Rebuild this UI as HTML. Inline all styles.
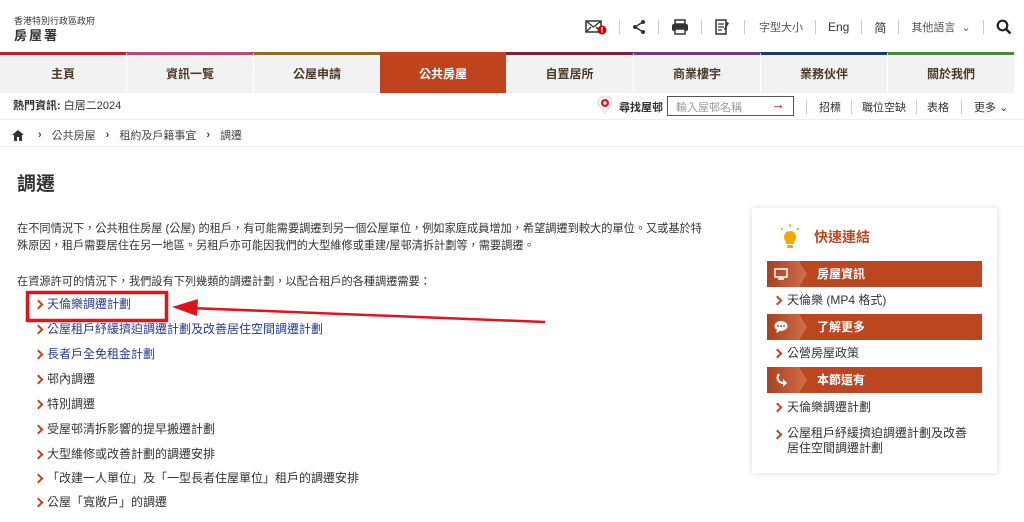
<!DOCTYPE html>
<html><head><meta charset="utf-8"><style>
*{margin:0;padding:0;box-sizing:border-box}
body{width:1024px;height:522px;overflow:hidden;background:#fff;font-family:"Liberation Sans","Noto Sans CJK TC",sans-serif;color:#333;position:relative;font-size:12px}
.abs{position:absolute}
.nav{position:absolute;top:52px;height:41px;background:#f2f2f2;border-top:3px solid;text-align:center;line-height:38px;font-size:12px;font-weight:bold;color:#4a3a2a}
.sep{display:inline-block;width:1px;height:14px;background:#ccc;vertical-align:middle;flex:none}
.li{position:absolute;left:47px;font-size:12px;color:#333;line-height:16px}
.li:before,.sl:before{content:"";position:absolute;left:-12px;top:5px;width:5px;height:5px;border-right:2px solid #c2441c;border-bottom:2px solid #c2441c;transform:rotate(-45deg)}
.blue{color:#2a3a8a}
.sh{position:absolute;left:767px;width:215px;height:26px;background:#bb4620;color:#fff;font-weight:bold;font-size:12px;line-height:26px;padding-left:50px}
.sh i{position:absolute;left:0;top:0;width:40px;height:26px;background:linear-gradient(90deg,#a84020,#d0704a);clip-path:polygon(0 0,80% 0,100% 50%,80% 100%,0 100%)}
.sl{position:absolute;left:787px;font-size:12px;color:#333;line-height:16px}
.sl:before{left:-13px}
.top span{white-space:nowrap}
</style></head><body>
<div class="abs" style="left:14px;top:14px;font-size:9px;color:#333">香港特別行政區政府</div>
<div class="abs" style="left:14px;top:25px;font-size:13px;font-weight:bold;letter-spacing:2px">房屋署</div>

<div class="abs top" style="top:17px;left:585px;width:430px;height:20px;display:flex;align-items:center;font-size:12px;color:#333;white-space:nowrap">
<svg width="22" height="16" viewBox="0 0 22 16" style="flex:none"><rect x="1" y="2" width="15" height="11" fill="none" stroke="#333" stroke-width="1.5"/><path d="M1 2l7.5 6L16 2M1 13l5-5M16 13l-5-5" fill="none" stroke="#333" stroke-width="1.3"/><circle cx="17" cy="11" r="4.5" fill="#c00"/><rect x="16.3" y="8" width="1.4" height="3.5" fill="#fff"/><rect x="16.3" y="12.3" width="1.4" height="1.2" fill="#fff"/></svg>
<span class="sep" style="margin:0 12px"></span>
<svg width="14" height="16" viewBox="0 0 14 16" style="flex:none"><circle cx="11" cy="3" r="2" fill="#333"/><circle cx="3" cy="8" r="2" fill="#333"/><circle cx="11" cy="13" r="2" fill="#333"/><path d="M11 3L3 8l8 5" stroke="#333" stroke-width="1.5" fill="none"/></svg>
<span class="sep" style="margin:0 12px"></span>
<svg width="18" height="16" viewBox="0 0 18 16" style="flex:none"><rect x="4" y="1" width="10" height="4" fill="none" stroke="#333" stroke-width="1.5"/><rect x="1" y="5" width="16" height="7" rx="2" fill="#333"/><rect x="4" y="10" width="10" height="5" fill="#fff" stroke="#333" stroke-width="1.5"/></svg>
<span class="sep" style="margin:0 12px"></span>
<svg width="16" height="16" viewBox="0 0 16 16" style="flex:none"><path d="M2 1h10v14H2z" fill="none" stroke="#333" stroke-width="1.5"/><path d="M4 5h6M4 8h6M4 11h4" stroke="#333" stroke-width="1.3"/><path d="M13 3l2 1-4 7-1-.5z" fill="#333"/></svg>
<span class="sep" style="margin:0 14px"></span>
<span style="font-size:11px;color:#555">字型大小</span>
<span class="sep" style="margin:0 12px"></span>
<span style="font-size:12px">Eng</span>
<span class="sep" style="margin:0 12px"></span>
<span>简</span>
<span class="sep" style="margin:0 12px"></span>
<span style="font-size:11px;color:#555">其他語言 &nbsp;⌄</span>
<span class="sep" style="margin:0 12px"></span>
<svg width="16" height="16" viewBox="0 0 16 16" style="flex:none"><circle cx="6.5" cy="6.5" r="4.8" fill="none" stroke="#222" stroke-width="2.2"/><path d="M10 10l4.5 4.5" stroke="#222" stroke-width="2.5"/></svg>
</div>

<div class="nav" style="left:0;width:126px;border-color:#b8232e">主頁</div>
<div class="nav" style="left:126px;width:127px;border-color:#b84a78;border-left:1px solid #fff">資訊一覽</div>
<div class="nav" style="left:253px;width:127px;border-color:#8c6a22;border-left:1px solid #fff">公屋申請</div>
<div class="nav" style="left:380px;width:126px;border-color:#bf441e;background:#bf441e;color:#fff">公共房屋</div>
<div class="nav" style="left:506px;width:127px;border-color:#7a2040">自置居所</div>
<div class="nav" style="left:633px;width:127px;border-color:#6a3a8a;border-left:1px solid #fff">商業樓宇</div>
<div class="nav" style="left:760px;width:127px;border-color:#1e3a6a;border-left:1px solid #fff">業務伙伴</div>
<div class="nav" style="left:887px;width:127px;border-color:#4a8a3a;border-left:1px solid #fff">關於我們</div>

<div class="abs" style="left:13px;top:97px;font-size:11px"><b>熱門資訊:</b> 白居二2024</div>
<div class="abs" style="left:597px;top:96px;width:16px;height:18px"><svg width="16" height="18" viewBox="0 0 16 18"><path d="M8 17C3 11 1 9 1 6.5a7 7 0 0114 0C15 9 13 11 8 17z" fill="#f0f0f0" stroke="#ddd"/><circle cx="8" cy="7" r="4" fill="#d0203a"/><circle cx="8" cy="7" r="1.6" fill="#fff"/></svg></div>
<div class="abs" style="left:619px;top:99px;font-size:11px;font-weight:bold">尋找屋邨</div>
<div class="abs" style="left:667px;top:96px;width:127px;height:20px;border:1px solid #555;font-size:11px;color:#999;padding:2px 8px">輸入屋邨名稱<span style="position:absolute;right:8px;top:-1px;color:#c00;font-size:14px">→</span></div>
<div class="abs" style="left:806px;top:99px;font-size:11px;display:flex;align-items:center;white-space:nowrap"><span class="sep" style="margin-right:12px"></span>招標<span class="sep" style="margin:0 10px"></span>職位空缺<span class="sep" style="margin:0 10px"></span>表格<span class="sep" style="margin:0 12px"></span>更多 ⌄</div>

<div class="abs" style="left:0;top:119px;width:1024px;height:28px;border-top:1px solid #eee;border-bottom:1px solid #eee"></div>
<div class="abs" style="left:12px;top:127px;font-size:11px;color:#444;display:flex;align-items:center">
<svg width="12" height="11" viewBox="0 0 12 11"><path d="M6 0L0 5h2v6h3V7h2v4h3V5h2z" fill="#333"/></svg>
<span style="margin:0 10px 0 14px;font-weight:bold">›</span>公共房屋<span style="margin:0 10px;font-weight:bold">›</span>租約及戶籍事宜<span style="margin:0 10px;font-weight:bold">›</span>調遷</div>

<div class="abs" style="left:17px;top:169px;font-size:19px;font-weight:bold;color:#333">調遷</div>
<div class="abs" style="left:17px;top:221px;width:740px;font-size:11.2px;line-height:17px">在不同情況下，公共租住房屋 (公屋) 的租戶，有可能需要調遷到另一個公屋單位，例如家庭成員增加，希望調遷到較大的單位。又或基於特<br>殊原因，租戶需要居住在另一地區。另租戶亦可能因我們的大型維修或重建/屋邨清拆計劃等，需要調遷。</div>
<div class="abs" style="left:17px;top:273px;font-size:11.2px">在資源許可的情況下，我們設有下列幾類的調遷計劃，以配合租戶的各種調遷需要：</div>

<div class="li blue" style="top:296px">天倫樂調遷計劃</div>
<div class="li blue" style="top:321px">公屋租戶紓緩擠迫調遷計劃及改善居住空間調遷計劃</div>
<div class="li blue" style="top:346px">長者戶全免租金計劃</div>
<div class="li" style="top:371px">邨內調遷</div>
<div class="li" style="top:396px">特別調遷</div>
<div class="li" style="top:421px">受屋邨清拆影響的提早搬遷計劃</div>
<div class="li" style="top:446px">大型維修或改善計劃的調遷安排</div>
<div class="li" style="top:470px">「改建一人單位」及「一型長者住屋單位」租戶的調遷安排</div>
<div class="li" style="top:494px">公屋「寬敞戶」的調遷</div>

<svg class="abs" style="left:0;top:0" width="1024" height="522"><rect x="27.5" y="292.5" width="139" height="28" fill="none" stroke="#e0151b" stroke-width="3.5"/><path d="M545 322L190 308" stroke="#e0151b" stroke-width="2.5"/><path d="M172 307l26-8-1 17z" fill="#e0151b"/></svg>

<div class="abs" style="left:752px;top:208px;width:245px;height:265px;background:#fff;box-shadow:0 0 6px rgba(0,0,0,.15)"></div>
<svg class="abs" style="left:778px;top:222px" width="24" height="28" viewBox="0 0 24 28"><path d="M12 2v3M3 6l2 2M21 6l-2 2" stroke="#f2a900" stroke-width="1.5"/><path d="M12 9a6 6 0 00-4 10.5V22h8v-2.5A6 6 0 0012 9z" fill="#f2a900"/><rect x="9" y="23" width="6" height="3" rx="1" fill="#f2a900"/></svg>
<div class="abs" style="left:814px;top:227px;font-size:14px;font-weight:bold;color:#b8461e">快速連結</div>
<div class="sh" style="top:261px"><i></i><svg class="abs" style="left:7px;top:7px" width="14" height="12" viewBox="0 0 14 12"><rect x="1" y="1" width="12" height="8" fill="none" stroke="#fff" stroke-width="1.5"/><path d="M4 11h6M7 9v2" stroke="#fff" stroke-width="1.5"/></svg>房屋資訊</div>
<div class="sl" style="top:292px">天倫樂 (MP4 格式)</div>
<div class="sh" style="top:314px"><i></i><svg class="abs" style="left:7px;top:6px" width="14" height="13" viewBox="0 0 14 13"><ellipse cx="7" cy="6" rx="6.5" ry="5" fill="#fff"/><path d="M3 10l-1 3 4-2z" fill="#fff"/><circle cx="4" cy="6" r="1" fill="#bb4620"/><circle cx="7" cy="6" r="1" fill="#bb4620"/><circle cx="10" cy="6" r="1" fill="#bb4620"/></svg>了解更多</div>
<div class="sl" style="top:345px">公營房屋政策</div>
<div class="sh" style="top:367px"><i></i><svg class="abs" style="left:8px;top:6px" width="14" height="14" viewBox="0 0 14 14"><path d="M4 1C1 5 3 10 9 10" fill="none" stroke="#fff" stroke-width="2"/><path d="M8 6l4 4-4 4z" fill="#fff"/></svg>本節還有</div>
<div class="sl" style="top:399px">天倫樂調遷計劃</div>
<div class="sl" style="top:426px;line-height:15px">公屋租戶紓緩擠迫調遷計劃及改善<br>居住空間調遷計劃</div>
</body></html>
